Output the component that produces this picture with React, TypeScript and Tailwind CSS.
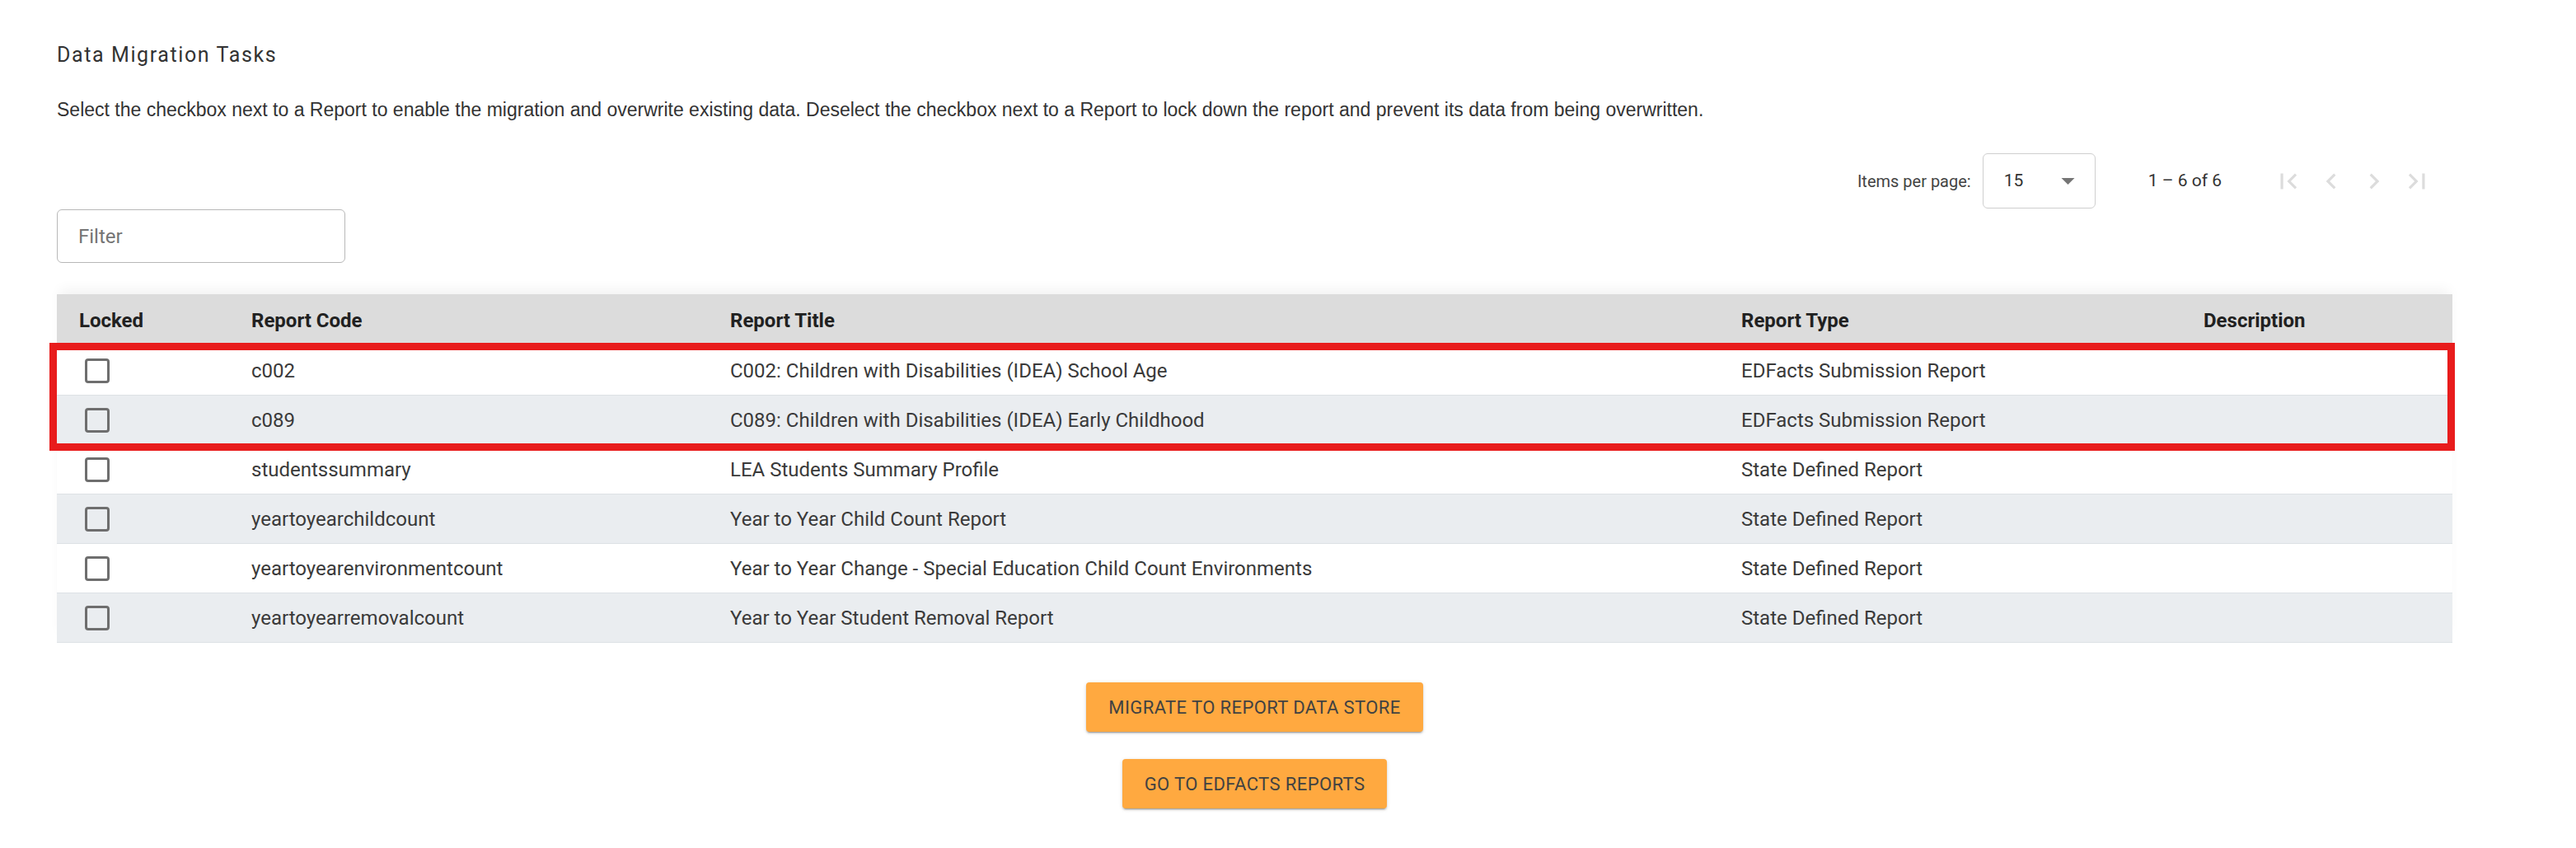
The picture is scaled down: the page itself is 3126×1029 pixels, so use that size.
import React from "react";

const rows = [
  { code: "c002", title: "C002: Children with Disabilities (IDEA) School Age", type: "EDFacts Submission Report" },
  { code: "c089", title: "C089: Children with Disabilities (IDEA) Early Childhood", type: "EDFacts Submission Report" },
  { code: "studentssummary", title: "LEA Students Summary Profile", type: "State Defined Report" },
  { code: "yeartoyearchildcount", title: "Year to Year Child Count Report", type: "State Defined Report" },
  { code: "yeartoyearenvironmentcount", title: "Year to Year Change - Special Education Child Count Environments", type: "State Defined Report" },
  { code: "yeartoyearremovalcount", title: "Year to Year Student Removal Report", type: "State Defined Report" },
];

function Icon({ d }: { d: string }) {
  return (
    <svg viewBox="0 0 24 24" className="w-[38px] h-[38px]" fill="#dcdcdc">
      <path d={d} />
    </svg>
  );
}

export default function App() {
  return (
    <div className="relative w-[3126px] h-[1029px] overflow-hidden bg-white font-['Roboto',sans-serif]">
      <div className="ml-[69px] w-[2907px] pt-[51px]">
        <h1 className="text-[25px] leading-[32px] tracking-[1.6px] text-[#333333] font-normal">
          Data Migration Tasks
        </h1>
        <p className="mt-[34px] text-[23px] leading-[32px] text-[#333333] font-['Liberation_Sans',Arial,sans-serif]">
          Select the checkbox next to a Report to enable the migration and overwrite existing data. Deselect the checkbox next to a Report to lock down the report and prevent its data from being overwritten.
        </p>

        <div className="mt-[37px] flex items-center justify-end pr-[24px] h-[67px]">
          <span className="text-[20px] text-[#444444]">Items per page:</span>
          <div className="ml-[14px] w-[137px] h-[67px] border border-[#cfcfcf] rounded-[6px] flex items-center pl-[25px] pr-[24px] justify-between">
            <span className="text-[21px] text-[#333333]">15</span>
            <svg viewBox="0 0 10 5" className="w-[17px] h-[8px]" fill="#757575">
              <path d="M0 0 L10 0 L5 5 Z" />
            </svg>
          </div>
          <span className="ml-[64px] text-[21px] text-[#333333]">1 – 6 of 6</span>
          <div className="ml-[62px] flex items-center gap-[14px]">
            <Icon d="M18.41 16.59L13.82 12l4.59-4.59L17 6l-6 6 6 6zM6 6h2v12H6z" />
            <Icon d="M15.41 7.41L14 6l-6 6 6 6 1.41-1.41L10.83 12z" />
            <Icon d="M10 6L8.59 7.41 13.17 12l-4.58 4.59L10 18l6-6z" />
            <Icon d="M5.59 7.41L10.18 12l-4.59 4.59L7 18l6-6-6-6zM16 6h2v12h-2z" />
          </div>
        </div>

        <div className="mt-[1px] w-[350px] h-[65px] border border-[#b8b8b8] rounded-[6px] flex items-center pl-[25px]">
          <span className="text-[24px] text-[#757575]">Filter</span>
        </div>

        <div className="mt-[38px] shadow-[0_-10px_14px_-4px_rgba(0,0,0,0.05)]">
          <div className="grid grid-cols-[236px_581px_1227px_561px_1fr] h-[63px] items-center bg-[#dcdcdc] text-[24px] font-bold text-[#212121]">
            <div className="pl-[27px]">Locked</div>
            <div>Report Code</div>
            <div>Report Title</div>
            <div>Report Type</div>
            <div>Description</div>
          </div>
          {rows.map((r, i) => (
            <div
              key={r.code}
              className={
                "grid grid-cols-[236px_581px_1227px_561px_1fr] h-[60px] items-center text-[24px] text-[#3a3a3a] border-b border-[#dde1e5] " +
                (i % 2 === 1 ? "bg-[#eaedf0]" : "bg-white")
              }
            >
              <div className="pl-[34px] flex items-center">
                <div className="w-[30px] h-[30px] border-[3.5px] border-[#6e6e6e] rounded-[4px]" />
              </div>
              <div>{r.code}</div>
              <div>{r.title}</div>
              <div>{r.type}</div>
              <div></div>
            </div>
          ))}
        </div>

        <div className="mt-[48px] flex flex-col items-center gap-[33px]">
          <button className="h-[60px] px-[27px] bg-[#ffa940] rounded-[4px] text-[22px] tracking-[0.4px] text-[#424242] shadow-[0_3px_1px_-2px_rgba(0,0,0,0.2),0_2px_2px_0_rgba(0,0,0,0.14),0_1px_5px_0_rgba(0,0,0,0.12)]">
            MIGRATE TO REPORT DATA STORE
          </button>
          <button className="h-[60px] px-[27px] bg-[#ffa940] rounded-[4px] text-[22px] tracking-[0.4px] text-[#424242] shadow-[0_3px_1px_-2px_rgba(0,0,0,0.2),0_2px_2px_0_rgba(0,0,0,0.14),0_1px_5px_0_rgba(0,0,0,0.12)]">
            GO TO EDFACTS REPORTS
          </button>
        </div>
      </div>

      <div className="absolute left-[60px] top-[416px] w-[2919px] h-[131px] border-[9px] border-[#e81c1c] pointer-events-none" />
    </div>
  );
}
